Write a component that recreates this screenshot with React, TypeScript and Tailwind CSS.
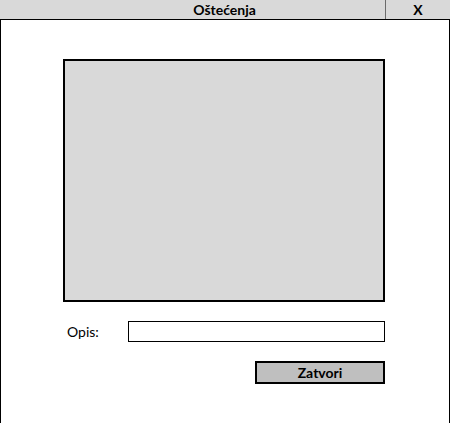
export default function App() {
  return (
    <div className="w-[450px] h-[423px] bg-white flex flex-col font-['Lato','Noto_Sans',sans-serif] text-black">
      {/* Title bar */}
      <div className="flex h-[20px] bg-[#d9d9d9] border-b border-black">
        <div className="w-[64px]" />
        <div className="flex-1 flex items-center justify-center text-[14px] font-bold">Oštećenja</div>
        <div className="w-[65px] border-l border-[#6b6b6b] flex items-center justify-center text-[14px] font-bold">
          X
        </div>
      </div>

      {/* Body */}
      <div className="flex-1 border-l border-r border-black pl-[62px] pt-[39px]">
        <div className="w-[322px] h-[243px] bg-[#d9d9d9] border-2 border-black" />

        <div className="flex items-center mt-[19px] w-[322px]">
          <span className="w-[65px] pl-[4px] text-[14px]">Opis:</span>
          <input className="w-[257px] h-[21px] border border-black bg-white outline-none px-1 text-[13px]" />
        </div>

        <div className="flex justify-end w-[322px] mt-[19px]">
          <button className="w-[130px] h-[23px] bg-[#bfbfbf] border-2 border-black text-[14px] font-bold flex items-center justify-center">
            Zatvori
          </button>
        </div>
      </div>
    </div>
  );
}
